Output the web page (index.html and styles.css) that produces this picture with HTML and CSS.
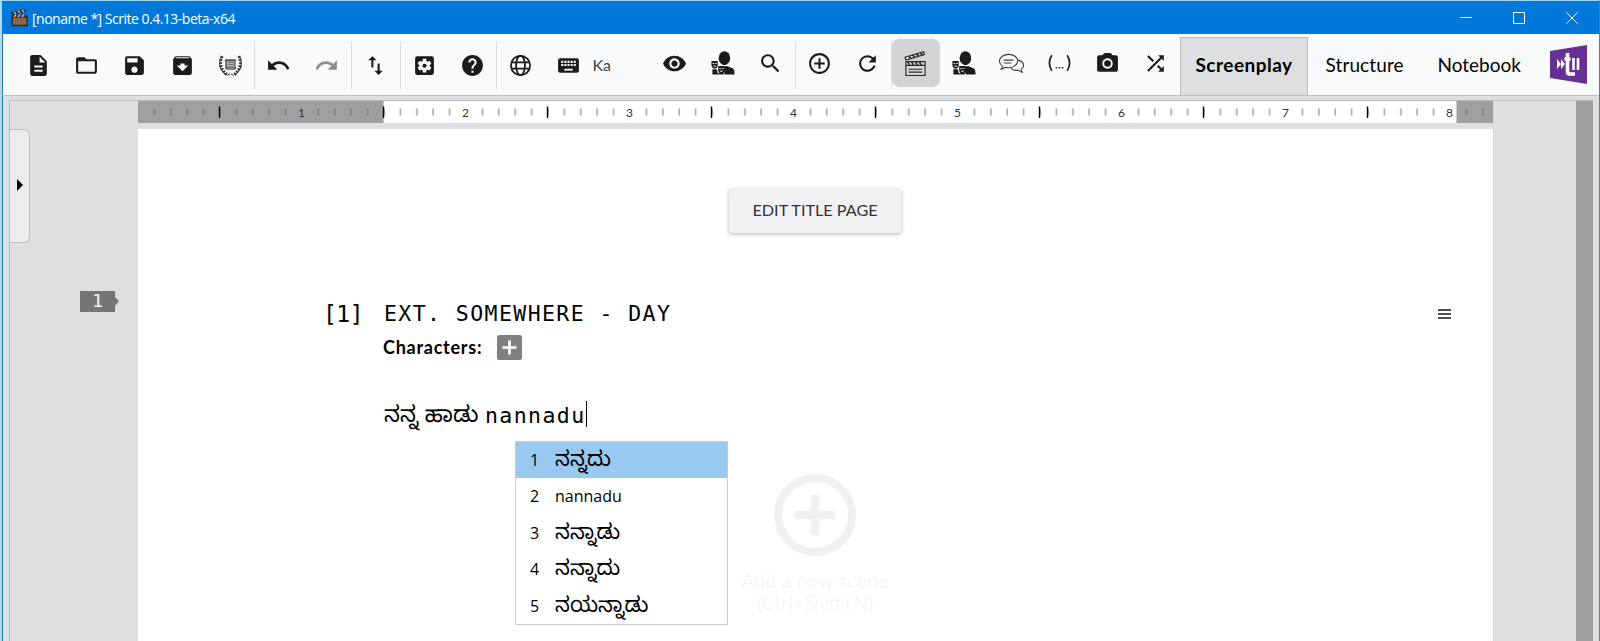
FILE: index.html
```html
<!DOCTYPE html>
<html lang="en">
<head>
<meta charset="utf-8">
<title>Scrite</title>
<link rel="stylesheet" href="styles.css">
</head>
<body>
<svg class="defs" width="0" height="0" aria-hidden="true">
  <symbol id="people" viewBox="0 0 26 26">
    <ellipse cx="15" cy="7.500" rx="6" ry="7.200"/>
    <path d="M12.500 17l5-1.500 6 2.500q2 1 2 6.500h-10z"/>
    <path d="M1.500 10.500h6.500v5q-1 3-3.200 3t-3.300-3zM8.500 15.500h6.500v5q-1 3.500-3.200 3.500t-3.300-3.500zM2.500 19h4.500l1.500 5.500H2.500zM8.500 23l3 1 3-1v1.500h-6z"/>
    <path d="M2.700 13h1.600M5.400 13h1.600M3.500 15.700h2.800M9.700 18.300h1.600M12.300 18.300h1.600M10.500 21h2.600" stroke="#f8f9fb" stroke-width="1" fill="none"/>
  </symbol>
</svg>
<div class="window">
  <header class="titlebar">
    <svg class="app-icon" viewBox="0 0 17 18"><path d="M1 8h15v8.500H1z" fill="#8a6748"/><path d="M1 8h15v8.500H1z" fill="none" stroke="#2f2b2b" stroke-width="1.500"/><path d="M0 3l14-3 1 3L1 7zM1 6h15v3H1z" fill="#3b3434"/><path d="M3 3l2 2M7 2l2 2M11 1l2 2M3 8l2-2M7 8l2-2M11 8l2-2" stroke="#e6b5b0" stroke-width="1.300"/></svg>
    <span class="window-title">[noname *] Scrite 0.4.13-beta-x64</span>
    <svg class="win-btn" viewBox="0 0 12 12"><path d="M0 5.500h12"/></svg>
    <svg class="win-btn" viewBox="0 0 12 12"><path d="M.5.5h11v11H.5z"/></svg>
    <svg class="win-btn" viewBox="0 0 12 12"><path d="M.5.5l11 11M11.500.5l-11 11"/></svg>
  </header>

  <nav class="toolbar">
    <div class="group first">
      <span class="tool"><svg viewBox="0 0 24 24"><path d="M14 2H6c-1.100 0-2 .9-2 2v16c0 1.100.9 2 2 2h12c1.100 0 2-.9 2-2V8l-6-6zm2 16H8v-2h8v2zm0-4H8v-2h8v2zm-3-5V3.500L18.500 9H13z"/></svg></span>
      <span class="tool"><svg viewBox="0 0 24 24"><path d="M20 6h-8l-2-2H4c-1.100 0-2 .9-2 2v12c0 1.100.9 2 2 2h16c1.100 0 2-.9 2-2V8c0-1.100-.9-2-2-2zm0 12H4V8h16v10z"/></svg></span>
      <span class="tool"><svg viewBox="0 0 24 24"><path d="M17 3H5c-1.110 0-2 .9-2 2v14c0 1.100.89 2 2 2h14c1.100 0 2-.9 2-2V7l-4-4zm-5 16c-1.660 0-3-1.340-3-3s1.340-3 3-3 3 1.340 3 3-1.340 3-3 3zm3-10H5V5h10v4z"/></svg></span>
      <span class="tool"><svg viewBox="0 0 24 24"><path d="M20.540 5.230l-1.390-1.680C18.880 3.210 18.470 3 18 3H6c-.47 0-.88.21-1.160.55L3.460 5.230C3.170 5.570 3 6.020 3 6.500V19c0 1.100.9 2 2 2h14c1.100 0 2-.9 2-2V6.500c0-.48-.17-.93-.46-1.270zM12 17.500L6.500 12H10v-2h4v2h3.500L12 17.500zM5.120 5l.81-1h12l.94 1H5.120z"/></svg></span>
      <span class="tool"><svg viewBox="0 0 24 24"><g fill="none" stroke="#333"><path d="M3 4Q-1.500 14 8 21M21 4q4.500 10-5 17" stroke-width="1"/><path d="M4 3Q-.5 13 9 21.500M20 3q4.500 10-5 18.500" stroke-width="2.800" stroke-dasharray="1.700 1.300"/><path d="M9 21.500l2.500-1.500M15 21.500L12.500 20"/></g><path d="M7 6h9q2 0 1.500 2H8.500v5H17q1 3-1 3H8q-2-1-1-3V8q-1-1 0-2z" fill="#555"/><path d="M9 8h8v5H9z" fill="#777"/><path d="M9.500 10h6M9.500 12h6M8 14.500h8" stroke="#ddd" stroke-width=".6"/></svg></span>
    </div>
    <div class="group undo">
      <span class="tool"><svg viewBox="0 0 24 24"><path d="M12.500 8c-2.650 0-5.050.99-6.900 2.600L2 7v9h9l-3.620-3.620c1.390-1.160 3.160-1.880 5.120-1.880 3.540 0 6.550 2.310 7.600 5.500l2.370-.78C21.080 11.030 17.150 8 12.500 8z"/></svg></span>
      <span class="tool disabled"><svg viewBox="0 0 24 24"><path d="M18.400 10.600C16.550 8.990 14.150 8 11.500 8c-4.650 0-8.580 3.030-9.960 7.220L3.900 16c1.050-3.190 4.050-5.500 7.600-5.500 1.950 0 3.730.72 5.120 1.880L13 16h9V7l-3.600 3.600z"/></svg></span>
    </div>
    <div class="group">
      <span class="tool"><svg viewBox="0 0 24 24"><path d="M16 17.010V10h-2v7.010h-3L15 21l4-3.990h-3zM9 3L5 6.990h3V14h2V6.990h3L9 3z"/></svg></span>
    </div>
    <div class="group">
      <span class="tool"><svg viewBox="0 0 24 24"><path fill-rule="evenodd" d="M5 3h14q2 0 2 2v14q0 2-2 2H5q-2 0-2-2V5q0-2 2-2zm5.300 2.500v2l-1.300.8-1.900-.9-1.700 2.900 1.600 1.200v1.300l-1.600 1.200 1.700 2.900 1.900-.9 1.300.8v2h3.400v-2l1.300-.8 1.900.9 1.700-2.900-1.600-1.200v-1.300l1.600-1.200-1.700-2.900-1.900.9-1.300-.8v-2z"/><circle cx="12" cy="12.200" r="2"/></svg></span>
      <span class="tool"><svg viewBox="0 0 24 24"><path d="M12 2C6.480 2 2 6.480 2 12s4.480 10 10 10 10-4.480 10-10S17.520 2 12 2zm1 17h-2v-2h2v2zm2.070-7.750l-.9.920C13.450 12.900 13 13.500 13 15h-2v-.5c0-1.100.45-2.100 1.170-2.830l1.240-1.260c.37-.36.59-.86.59-1.410 0-1.100-.9-2-2-2s-2 .9-2 2H8c0-2.210 1.790-4 4-4s4 1.790 4 4c0 .88-.36 1.680-.93 2.250z"/></svg></span>
    </div>
    <div class="group">
      <span class="tool"><svg viewBox="0 0 24 24"><g fill="none" stroke="#1b1b1d" stroke-width="1.700"><circle cx="12" cy="12" r="9.200"/><ellipse cx="12" cy="12" rx="4.300" ry="9.200"/><path d="M3 9h18M3 15h18"/></g></svg></span>
      <span class="tool"><svg viewBox="0 0 24 24"><rect x="2" y="5" width="20" height="14" rx="2"/><path d="M5 8.500h14M5 11.500h14" stroke="#f8f9fb" stroke-width="2" stroke-dasharray="2 1"/><path d="M8 16h8" stroke="#f8f9fb" stroke-width="1.800"/></svg></span>
      <span class="lang">Ka</span>
    </div>
    <div class="group raised plain">
      <span class="tool"><svg viewBox="0 0 24 24"><path d="M12 4.500C7 4.500 2.730 7.610 1 12c1.730 4.390 6 7.500 11 7.500s9.270-3.110 11-7.500c-1.730-4.390-6-7.500-11-7.500zM12 17c-2.760 0-5-2.240-5-5s2.240-5 5-5 5 2.240 5 5-2.240 5-5 5zm0-8c-1.660 0-3 1.340-3 3s1.340 3 3 3 3-1.340 3-3-1.340-3-3-3z"/></svg></span>
      <span class="tool"><svg><use href="#people"/></svg></span>
      <span class="tool"><svg viewBox="0 0 24 24"><path d="M15.500 14h-.79l-.28-.27C15.410 12.590 16 11.110 16 9.500 16 5.910 13.090 3 9.500 3S3 5.910 3 9.500 5.910 16 9.500 16c1.610 0 3.090-.59 4.230-1.570l.27.28v.79l5 4.990L20.490 19l-4.990-5zm-6 0C7.010 14 5 11.990 5 9.500S7.010 5 9.500 5 14 7.010 14 9.500 11.990 14 9.500 14z"/></svg></span>
    </div>
    <div class="group raised">
      <span class="tool"><svg viewBox="0 0 24 24"><path d="M13 7h-2v4H7v2h4v4h2v-4h4v-2h-4V7zm-1-5C6.480 2 2 6.480 2 12s4.480 10 10 10 10-4.480 10-10S17.520 2 12 2zm0 18c-4.410 0-8-3.590-8-8s3.590-8 8-8 8 3.590 8 8-3.590 8-8 8z"/></svg></span>
      <span class="tool"><svg viewBox="0 0 24 24"><path d="M17.650 6.350C16.200 4.900 14.210 4 12 4c-4.420 0-7.990 3.580-7.990 8s3.570 8 7.990 8c3.730 0 6.840-2.550 7.730-6h-2.080c-.82 2.330-3.040 4-5.650 4-3.310 0-6-2.690-6-6s2.690-6 6-6c1.660 0 3.140.69 4.220 1.780L13 11h7V4l-2.350 2.350z"/></svg></span>
    </div>
    <div class="group raised">
      <span class="tool active"><svg viewBox="0 0 26 26"><g fill="none" stroke="#2c2c2e" stroke-width="1.200"><path d="M3 11h20v14.500H3zM3 15h20M2 6.500L21.500.8l.8 3L3 9.500zM6 19h14M6 22h14"/><path d="M5 11l2 4M9 11l2 4M13 11l2 4M17 11l2 4M6 5.500l2.500 2.600M10 4.200l2.500 2.600M14 3l2.500 2.600M18 2l2.500 2.400" stroke-width="1.700"/></g></svg></span>
      <span class="tool"><svg><use href="#people"/></svg></span>
      <span class="tool"><svg viewBox="0 0 26 26"><g fill="none" stroke="#3a3a3c" stroke-width="1.100"><path d="M3.500 16Q.5 13.500.5 10.500C.5 6.500 5 3.500 10 3.500s9.500 3 9.500 7-5 7-10 7q-2 0-3.500-.5-2 2-4 2 1.500-1.500 1.500-3z"/><path d="M19.800 9.500q5.700 1.500 5.700 5.500 0 2.500-2.500 4 0 1.500 1.200 3-2.500 0-4-2-5 .8-8-2.300M5 9.500h10M5 12.500h8"/></g></svg></span>
      <span class="tool"><svg viewBox="0 0 26 26"><path d="M5 4.500q-5 8 0 16M21 4.500q5 8 0 16" fill="none" stroke="#222" stroke-width="1.800"/><path d="M9 17.500h9" stroke="#333" stroke-width="1.500" stroke-dasharray="1.700 1.500"/></svg></span>
      <span class="tool"><svg viewBox="0 0 24 24"><circle cx="12" cy="12" r="3.200"/><path d="M9 2L7.170 4H4c-1.100 0-2 .9-2 2v12c0 1.100.9 2 2 2h16c1.100 0 2-.9 2-2V6c0-1.100-.9-2-2-2h-3.170L15 2H9zm3 15c-2.760 0-5-2.240-5-5s2.240-5 5-5 5 2.240 5 5-2.240 5-5 5z"/></svg></span>
      <span class="tool"><svg viewBox="0 0 24 24"><path d="M10.590 9.170L5.410 4 4 5.410l5.170 5.170 1.420-1.410zM14.500 4l2.040 2.040L4 18.590 5.410 20 17.960 7.460 20 9.500V4h-5.500zm.33 9.410l-1.410 1.410 3.130 3.130L14.500 20H20v-5.500l-2.040 2.040-3.130-3.130z"/></svg></span>
    </div>
    <div class="tabs">
      <span class="tab selected">Screenplay</span>
      <span class="tab t-structure">Structure</span>
      <span class="tab t-notebook">Notebook</span>
    </div>
    <svg class="logo" viewBox="0 0 37 39"><path d="M0 6L37 0v39L0 33z" fill="#663191"/><path d="M7 14l4 5-4 5zM11 14l4 5-4 5z" fill="#fff"/><path d="M17.500 8v19q0 2 2 2H25M14.500 14h6" fill="none" stroke="#fff" stroke-width="3.600"/><path d="M23.500 13v12M28 13v12" stroke="#fff" stroke-width="2.600"/></svg>
  </nav>

  <main class="workspace">
    <div class="frame">
      <aside class="gutter">
        <div class="drawer"><svg viewBox="0 0 6 12"><path d="M0 0l6 6-6 6z"/></svg></div>
        <div class="marker">1</div>
      </aside>
      <section class="editor">
        <svg class="ruler" viewBox="0 0 1355 22">
          <defs>
            <pattern id="minor" x="-1" y="0" width="16.400" height="22" patternUnits="userSpaceOnUse"><path d="M1 7.500v7" stroke="#6c6d70"/></pattern>
          </defs>
          <rect width="1355" height="22" fill="#9f9fa2"/>
          <rect x="245.500" width="1073" height="22" fill="#fff"/>
          <rect x="5" width="1350" height="22" fill="url(#minor)"/>
          <rect x="157" y="6" width="13" height="12" fill="#9f9fa2"/>
          <path d="M327.700 6v11M491.700 6v11M655.700 6v11M819.700 6v11M983.700 6v11M1147.700 6v11M1311.700 6v11" stroke="#fff" stroke-width="10"/>
          <path d="M81.500 5.500v11.500M245.500 5.500v11.500M409.500 5.500v11.500M573.500 5.500v11.500M737.500 5.500v11.500M901.500 5.500v11.500M1065.500 5.500v11.500M1229.500 5.500v11.500" stroke="#000" stroke-width="1.400"/>
          <g class="ruler-num"><text x="163.500" y="15.500">1</text><text x="327.500" y="15.500">2</text><text x="491.500" y="15.500">3</text><text x="655.500" y="15.500">4</text><text x="819.500" y="15.500">5</text><text x="983.500" y="15.500">6</text><text x="1147.500" y="15.500">7</text><text x="1311.500" y="15.500">8</text></g>
        </svg>
        <article class="page">
          <button class="edit-title">EDIT TITLE PAGE</button>
          <div class="scene-head">
            <span class="scene-no">[1]</span>
            <span class="scene-name">EXT. SOMEWHERE - DAY</span>
            <svg class="menu-icon" viewBox="0 0 13 10"><path d="M0 1h13M0 5h13M0 9h13"/></svg>
          </div>
          <div class="characters"><span class="char-label">Characters:</span><svg class="add" viewBox="0 0 25 25"><rect width="25" height="25" rx="2.500" fill="#808083"/><path d="M12.500 5.500v14M5.500 12.500h14" stroke="#fff" stroke-width="2.700"/></svg></div>
          <p class="action"><span class="kn">ನನ್ನ ಹಾಡು</span><span class="typing">nannadu</span></p>
          <ol class="candidates">
            <li class="current"><b>1</b><span class="kn">ನನ್ನದು</span></li>
            <li><b>2</b><span>nannadu</span></li>
            <li><b>3</b><span class="kn">ನನ್ನಾಡು</span></li>
            <li><b>4</b><span class="kn">ನನ್ನಾದು</span></li>
            <li><b>5</b><span class="kn">ನಯನ್ನಾಡು</span></li>
          </ol>
          <div class="new-scene">
            <svg viewBox="0 0 82 82"><circle cx="41" cy="41" r="37" fill="none" stroke="#eff0f2" stroke-width="8"/><path d="M41 21v40M21 41h40" stroke="#eff0f2" stroke-width="8"/></svg>
            <span class="ns1">Add a new scene</span><span class="ns2">(Ctrl+Shift+N)</span>
          </div>
        </article>
      </section>
      <div class="scrollbar"></div>
    </div>
  </main>
</div>
</body>
</html>
```
FILE: styles.css
```css
* { box-sizing: border-box; }
body { margin: 0; font-family: Lato, "Liberation Sans", sans-serif; color: #000; }
.defs { display: block; }
.window {
  width: 1600px; height: 641px; overflow: hidden;
  display: flex; flex-direction: column;
  border-left: 2px solid #a8dcf2; border-right: 1px solid #3c86b5; border-top: 1px solid #9ad7f2;
  background: #dedfe1;
}
.titlebar {
  height: 33px; flex: none; display: flex; align-items: center;
  background: #0078d9; color: #fff; padding: 0 21px 0 9px;
}
.app-icon { width: 17px; height: 18px; }
.window-title { font: 14px/33px "Open Sans", "Noto Sans", sans-serif; margin-left: 4px; flex: 1; letter-spacing: -.5px; padding-top: 1px; }
.win-btn { width: 12px; height: 12px; margin-left: 41px; fill: none; stroke: #fff; stroke-width: 1; }

.toolbar {
  height: 62px; flex: none; display: flex; align-items: flex-start;
  background: #f9fafc; border-left: 1px solid #2b76a3; border-bottom: 1px solid #bcbdbf;
  padding: 0 12px 0 10px;
}
.group { display: flex; height: 48px; margin-top: 7px; border-left: 1px solid #dcdddf; }
.first, .plain { border-left-color: transparent; }
.undo { width: 97px; }
.plain { margin-left: 34.500px; }
.tool { width: 48px; height: 48px; display: flex; align-items: center; justify-content: center; }
.group:not(.first) .tool:first-child { width: 47.500px; }
.tool svg { width: 25px; height: 25px; fill: #1b1b1d; }
.raised .tool { height: 44px; }
.raised .tool.active { height: 48px; background: #d3d4d6; border-radius: 7px; margin-top: -2px; }
.disabled svg { fill: #8d8e90; }
.lang { width: 23px; font-size: 16px; line-height: 48px; color: #444; }
.tabs { display: flex; margin-top: 3px; height: 58px; line-height: 56px; font-size: 19px; }
.tab { display: block; }
.selected { width: 128px; background: #dedfe1; border: 1px solid #bcbdbf; border-bottom: 0; font-weight: bold; padding-left: 15px; line-height: 53px; letter-spacing: .48px; }
.t-structure { width: 112px; margin-left: 18px; letter-spacing: .1px; }
.t-notebook { width: 100px; }
.logo { width: 37px; height: 39px; margin: 11px 0 0 auto; flex: none; }

.workspace { flex: 1; padding: 4px 6px 0 6px; border-left: 1px solid #2b76a3; }
.frame { height: 542px; display: flex; border: 1px solid #bcbdbf; border-bottom: 0; border-right: 0; }
.gutter { width: 128px; flex: none; padding-top: 28px; }
.drawer {
  width: 20px; height: 114px; background: #ebecee; border: 1px solid #bcbdbf; border-left: 0;
  border-radius: 0 6px 6px 0; display: flex; align-items: center; padding: 0 0 2px 7px;
}
.drawer svg { width: 6px; height: 12px; }
.marker {
  width: 39px; height: 21px; margin: 48px 0 0 70px; padding-right: 4px;
  background: #737576; color: #f2f2f2; text-align: center; font: 18.500px/20px "DejaVu Sans Mono", monospace;
  clip-path: polygon(0 0, 35px 0, 35px 6px, 39px 10px, 35px 15px, 35px 100%, 0 100%);
}
.editor { width: 1355px; flex: none; display: flex; flex-direction: column; }
.ruler { display: block; width: 1355px; height: 22px; flex: none; }
.ruler-num { font: 12px Lato, sans-serif; text-anchor: middle; fill: #333; }
.page { position: relative; background: #fff; margin-top: 6px; flex: 1; display: flex; flex-direction: column; }
.edit-title {
  width: 172px; height: 44px; margin: 60px 0 0 591px; border: 0; border-radius: 3px; background: #f0f1f3;
  color: #333; font: 16.200px/40px Lato, sans-serif; padding: 0 0 3px; box-shadow: 0 1px 4px rgba(0,0,0,.3);
}
.scene-head { display: flex; height: 36px; line-height: 38px; margin-top: 62px; padding-left: 185px; font-family: "DejaVu Sans Mono", monospace; font-size: 21.500px; white-space: nowrap; }
.scene-no { width: 61px; letter-spacing: -.5px; font-size: 23px; }
.scene-name { width: 1054px; letter-spacing: 1.420px; }
.menu-icon { width: 13px; height: 10px; margin-top: 14px; stroke: #505154; stroke-width: 2; }
.characters { display: flex; align-items: center; height: 26px; margin-top: 3px; padding-left: 245px; }
.char-label { font-weight: bold; font-size: 18px; width: 114px; letter-spacing: .75px; }
.add { width: 25px; height: 25px; }
.action { display: flex; margin: 38px 0 0 246px; height: 36px; line-height: 36px; }
.kn { font-family: "Noto Sans Kannada", "Noto Sans", sans-serif; }
.action .kn { width: 101px; white-space: nowrap; font-size: 22.500px; padding-top: 3px; }
.typing { font: 21.500px/29px "DejaVu Sans Mono", monospace; letter-spacing: 1.420px; height: 26px; margin-top: 3px; border-right: 1px solid #000; }
.candidates {
  position: absolute; left: 377px; top: 312px; width: 213px; height: 184px; margin: 0; padding: 0;
  list-style: none; background: #fff; border: 1px solid #ccc; font: 16px "Open Sans", "Noto Sans", sans-serif;
}
.candidates li { height: 36.400px; line-height: 36px; display: flex; padding-left: 14px; }
.candidates b { font-weight: normal; width: 25px; }
.candidates .kn { font-size: 21px; padding-top: 3px; }
.current { background: #99c9ef; }
.new-scene { display: flex; flex-direction: column; align-items: center; width: 160px; margin: 40px 0 0 597px; color: #eff0f2; font-size: 19.500px; font-weight: 300; line-height: 22px; white-space: nowrap; }
.new-scene svg { width: 82px; height: 82px; margin-bottom: 14px; }
.ns1 { letter-spacing: .3px; }
.scrollbar { width: 17px; margin-left: auto; background: #9d9e9f; }
```
